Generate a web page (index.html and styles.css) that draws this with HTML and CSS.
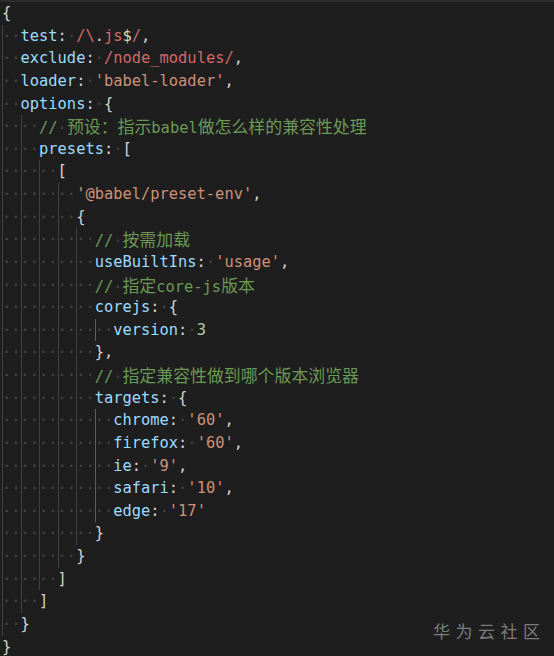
FILE: index.html
```html
<!DOCTYPE html>
<html lang="zh">
<head>
<meta charset="utf-8">
<title>babel-loader config</title>
<link rel="stylesheet" href="styles.css">
</head>
<body>
<div class="strip"></div>
<div class="code">
<div class="ln"><span class="p">{</span></div>
<div class="ln"><span class="ig">··</span><span class="k">test</span><span class="p">:</span><span class="ws">·</span><span class="re">/\</span><span class="p">.</span><span class="re">js</span><span class="an">$</span><span class="re">/</span><span class="p">,</span></div>
<div class="ln"><span class="ig">··</span><span class="k">exclude</span><span class="p">:</span><span class="ws">·</span><span class="re">/node_modules/</span><span class="p">,</span></div>
<div class="ln"><span class="ig">··</span><span class="k">loader</span><span class="p">:</span><span class="ws">·</span><span class="s">'babel-loader'</span><span class="p">,</span></div>
<div class="ln"><span class="ig">··</span><span class="k">options</span><span class="p">:</span><span class="ws">·</span><span class="p">{</span></div>
<div class="ln"><span class="ig">··</span><span class="ig">··</span><span class="c">//</span><span class="ws">·</span><span class="c"><span class="cjk">预设：指示</span>babel<span class="cjk">做怎么样的兼容性处理</span></span></div>
<div class="ln"><span class="ig">··</span><span class="ig">··</span><span class="k">presets</span><span class="p">:</span><span class="ws">·</span><span class="p">[</span></div>
<div class="ln"><span class="ig">··</span><span class="ig">··</span><span class="ig">··</span><span class="p">[</span></div>
<div class="ln"><span class="ig">··</span><span class="ig">··</span><span class="ig">··</span><span class="ig">··</span><span class="s">'@babel/preset-env'</span><span class="p">,</span></div>
<div class="ln"><span class="ig">··</span><span class="ig">··</span><span class="ig">··</span><span class="ig">··</span><span class="p">{</span></div>
<div class="ln"><span class="ig">··</span><span class="ig">··</span><span class="ig">··</span><span class="ig">··</span><span class="ig">··</span><span class="c">//</span><span class="ws">·</span><span class="c cjk">按需加载</span></div>
<div class="ln"><span class="ig">··</span><span class="ig">··</span><span class="ig">··</span><span class="ig">··</span><span class="ig">··</span><span class="k">useBuiltIns</span><span class="p">:</span><span class="ws">·</span><span class="s">'usage'</span><span class="p">,</span></div>
<div class="ln"><span class="ig">··</span><span class="ig">··</span><span class="ig">··</span><span class="ig">··</span><span class="ig">··</span><span class="c">//</span><span class="ws">·</span><span class="c"><span class="cjk">指定</span>core-js<span class="cjk">版本</span></span></div>
<div class="ln"><span class="ig">··</span><span class="ig">··</span><span class="ig">··</span><span class="ig">··</span><span class="ig">··</span><span class="k">corejs</span><span class="p">:</span><span class="ws">·</span><span class="p">{</span></div>
<div class="ln"><span class="ig">··</span><span class="ig">··</span><span class="ig">··</span><span class="ig">··</span><span class="ig">··</span><span class="ig active">··</span><span class="k">version</span><span class="p">:</span><span class="ws">·</span><span class="n">3</span></div>
<div class="ln"><span class="ig">··</span><span class="ig">··</span><span class="ig">··</span><span class="ig">··</span><span class="ig">··</span><span class="p">},</span></div>
<div class="ln"><span class="ig">··</span><span class="ig">··</span><span class="ig">··</span><span class="ig">··</span><span class="ig">··</span><span class="c">//</span><span class="ws">·</span><span class="c cjk">指定兼容性做到哪个版本浏览器</span></div>
<div class="ln"><span class="ig">··</span><span class="ig">··</span><span class="ig">··</span><span class="ig">··</span><span class="ig">··</span><span class="k">targets</span><span class="p">:</span><span class="ws">·</span><span class="p">{</span></div>
<div class="ln"><span class="ig">··</span><span class="ig">··</span><span class="ig">··</span><span class="ig">··</span><span class="ig">··</span><span class="ig active">··</span><span class="k">chrome</span><span class="p">:</span><span class="ws">·</span><span class="s">'60'</span><span class="p">,</span></div>
<div class="ln"><span class="ig">··</span><span class="ig">··</span><span class="ig">··</span><span class="ig">··</span><span class="ig">··</span><span class="ig active">··</span><span class="k">firefox</span><span class="p">:</span><span class="ws">·</span><span class="s">'60'</span><span class="p">,</span></div>
<div class="ln"><span class="ig">··</span><span class="ig">··</span><span class="ig">··</span><span class="ig">··</span><span class="ig">··</span><span class="ig active">··</span><span class="k">ie</span><span class="p">:</span><span class="ws">·</span><span class="s">'9'</span><span class="p">,</span></div>
<div class="ln"><span class="ig">··</span><span class="ig">··</span><span class="ig">··</span><span class="ig">··</span><span class="ig">··</span><span class="ig active">··</span><span class="k">safari</span><span class="p">:</span><span class="ws">·</span><span class="s">'10'</span><span class="p">,</span></div>
<div class="ln"><span class="ig">··</span><span class="ig">··</span><span class="ig">··</span><span class="ig">··</span><span class="ig">··</span><span class="ig active">··</span><span class="k">edge</span><span class="p">:</span><span class="ws">·</span><span class="s">'17'</span></div>
<div class="ln"><span class="ig">··</span><span class="ig">··</span><span class="ig">··</span><span class="ig">··</span><span class="ig">··</span><span class="p">}</span></div>
<div class="ln"><span class="ig">··</span><span class="ig">··</span><span class="ig">··</span><span class="ig">··</span><span class="p">}</span></div>
<div class="ln"><span class="ig">··</span><span class="ig">··</span><span class="ig">··</span><span class="p">]</span></div>
<div class="ln"><span class="ig">··</span><span class="ig">··</span><span class="p">]</span></div>
<div class="ln"><span class="ig">··</span><span class="p">}</span></div>
<div class="ln"><span class="p">}</span></div>
</div>
<div class="watermark">华为云社区</div>
</body>
</html>
```

FILE: styles.css
```css
html, body {
  margin: 0;
  padding: 0;
  background: #1e1e1e;
  height: 100%;
  overflow: hidden;
}

body {
  position: relative;
}

.strip {
  height: 2px;
  background: #2c2c2c;
}

.code {
  font-family: "DejaVu Sans Mono", "Liberation Mono", monospace;
  font-size: 15.4px;
  color: #d4d4d4;
  padding-left: 2px;
}

.ln {
  height: 22.64px;
  line-height: 22.64px;
  white-space: pre;
}

.ig {
  display: inline-block;
  width: 2ch;
  height: 22.64px;
  vertical-align: top;
  box-shadow: inset 1px 0 0 #404040;
  color: #444444;
}

.ig.active {
  box-shadow: inset 1px 0 0 #5e5e5e;
}

.ws {
  color: #444444;
}

.k { color: #9cdcfe; }
.p { color: #d4d4d4; }
.s { color: #ce9178; }
.re { color: #d16969; }
.an { color: #dcdcaa; }
.n { color: #b5cea8; }
.c { color: #6a9955; }

.cjk {
  font-family: "Noto Sans CJK SC", sans-serif;
  font-size: 16.9px;
}

.watermark {
  position: absolute;
  right: 14px;
  bottom: 15px;
  font-family: "Noto Sans CJK SC", sans-serif;
  font-size: 17px;
  letter-spacing: 5.5px;
  margin-right: -5.5px;
  color: #7c7c7c;
  line-height: 20px;
}
```
